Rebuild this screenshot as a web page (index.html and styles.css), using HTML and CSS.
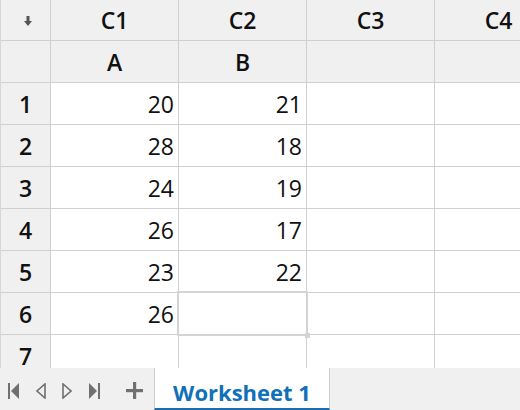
FILE: index.html
```html
<!DOCTYPE html>
<html lang="en">
  <head>
    <meta charset="UTF-8" />
    <meta name="viewport" content="width=device-width, initial-scale=1.0" />
    <title>Worksheet 1</title>
    <link rel="stylesheet" href="styles.css">
  </head>
  <body>
    <main class="sheet">
      <div class="grid">
        <div class="head corner">
          <svg width="8" height="10" viewBox="0 0 8 10"><path d="M2.5 0h3v5h2.5L4 10 0 5h2.5z" fill="#555"/></svg>
        </div>
        <div class="head">C1</div>
        <div class="head">C2</div>
        <div class="head">C3</div>
        <div class="head">C4</div>

        <div class="head"></div>
        <div class="head">A</div>
        <div class="head">B</div>
        <div class="head"></div>
        <div class="head"></div>

        <div class="head">1</div><div class="cell">20</div><div class="cell">21</div><div class="cell"></div><div class="cell"></div>
        <div class="head">2</div><div class="cell">28</div><div class="cell">18</div><div class="cell"></div><div class="cell"></div>
        <div class="head">3</div><div class="cell">24</div><div class="cell">19</div><div class="cell"></div><div class="cell"></div>
        <div class="head">4</div><div class="cell">26</div><div class="cell">17</div><div class="cell"></div><div class="cell"></div>
        <div class="head">5</div><div class="cell">23</div><div class="cell">22</div><div class="cell"></div><div class="cell"></div>
        <div class="head">6</div><div class="cell">26</div><div class="cell selected"></div><div class="cell"></div><div class="cell"></div>
        <div class="head">7</div><div class="cell"></div><div class="cell"></div><div class="cell"></div><div class="cell"></div>
      </div>
    </main>

    <footer class="tabbar">
      <nav class="nav">
        <svg class="icon" width="12" height="16" viewBox="0 0 12 16"><rect x="0" y="0" width="2" height="16"/><path d="M11 0v16L3 8z"/></svg>
        <svg class="icon" width="10" height="16" viewBox="0 0 10 16"><path d="M9 1v14L1 8z" fill="none" stroke="#707070" stroke-width="1.6"/></svg>
        <svg class="icon" width="10" height="16" viewBox="0 0 10 16"><path d="M1 1v14l8-7z" fill="none" stroke="#707070" stroke-width="1.6"/></svg>
        <svg class="icon" width="12" height="16" viewBox="0 0 12 16"><path d="M1 0v16l8-8z"/><rect x="10" y="0" width="2" height="16"/></svg>
        <svg class="icon plus" width="17" height="17" viewBox="0 0 17 17"><rect x="7" y="0" width="3.2" height="17"/><rect x="0" y="7" width="17" height="3.2"/></svg>
      </nav>
      <div class="tab">Worksheet 1</div>
    </footer>
  </body>
</html>
```

FILE: styles.css
```css
* {
  box-sizing: border-box;
}

body {
  margin: 0;
  width: 520px;
  height: 410px;
  overflow: hidden;
  font-family: "Open Sans", "Noto Sans", sans-serif;
  display: flex;
  flex-direction: column;
}

.sheet {
  height: 368px;
  overflow: hidden;
  border-left: 1px solid #d6d6d6;
}

.grid {
  display: grid;
  grid-template-columns: 49px 127px 127px 127px 127px;
  grid-template-rows: 40px repeat(8, 41px);
  gap: 1px;
  background: #d0d0d0;
  width: 560px;
}

.head,
.cell {
  display: flex;
  align-items: center;
  font-size: 23px;
  color: #111;
}

.head {
  background: #f0f0f0;
  justify-content: center;
  font-weight: 600;
}

.corner {
  padding-top: 2px;
  padding-left: 4px;
}

.cell {
  background: #fff;
  justify-content: flex-end;
  padding-right: 4px;
}

.selected {
  position: relative;
  outline: 2px solid #d4d4d4;
}

.selected::after {
  content: "";
  position: absolute;
  right: -4px;
  bottom: -4px;
  width: 5px;
  height: 5px;
  background: #d4d4d4;
}

.tabbar {
  height: 42px;
  background: #f0f0f0;
  display: flex;
  align-items: stretch;
}

.nav {
  width: 154px;
  display: flex;
  align-items: center;
  padding-left: 8px;
  padding-top: 3px;
}

.icon {
  fill: #707070;
  margin-right: 16px;
}

.icon:nth-child(4) {
  margin-right: 26px;
}

.plus {
  margin-right: 0;
}

.tab {
  width: 176px;
  background: #fff;
  border-left: 1px solid #cfcfcf;
  border-right: 1px solid #cfcfcf;
  border-bottom: 2px solid #1a6db0;
  color: #1170b8;
  font-weight: 700;
  font-size: 22px;
  display: flex;
  align-items: center;
  justify-content: center;
  padding-top: 7px;
}
```
